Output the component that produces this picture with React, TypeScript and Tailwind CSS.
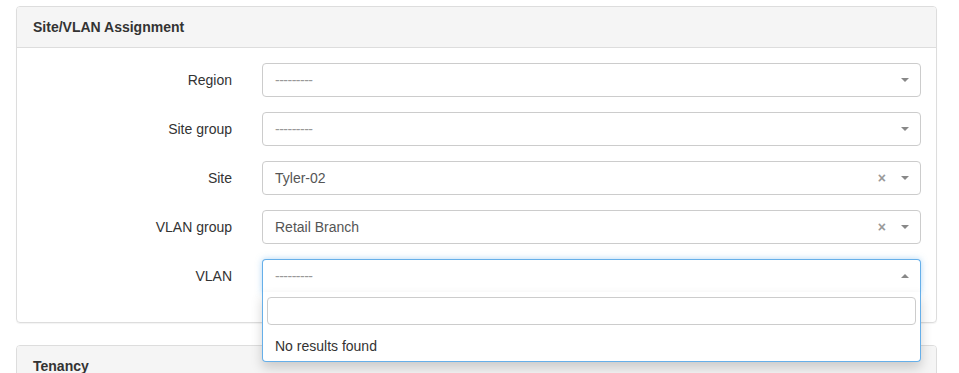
import React from "react";

const rows = [
  { label: "Region", value: "", clear: false },
  { label: "Site group", value: "", clear: false },
  { label: "Site", value: "Tyler-02", clear: true },
  { label: "VLAN group", value: "Retail Branch", clear: true },
];

function Caret({ up }: { up?: boolean }) {
  return (
    <span
      className={
        up
          ? "w-0 h-0 border-x-[4px] border-x-transparent border-b-[4px] border-b-[#888]"
          : "w-0 h-0 border-x-[4px] border-x-transparent border-t-[4px] border-t-[#888]"
      }
    />
  );
}

function Select({ value, clear }: { value: string; clear: boolean }) {
  return (
    <div className="flex-1 h-[34px] flex items-center border border-[#ccc] rounded-[4px] bg-white pl-3 pr-[11px]">
      {value ? (
        <span className="flex-1 text-[14px] text-[#555]">{value}</span>
      ) : (
        <span className="flex-1 text-[14px] text-[#999] tracking-[-0.5px]">---------</span>
      )}
      {clear && <span className="text-[14px] font-bold text-[#999] mr-[15px] leading-none">×</span>}
      <Caret />
    </div>
  );
}

export default function App() {
  return (
    <div className="w-[959px] h-[373px] overflow-hidden bg-white px-4 pt-[6px] font-['Liberation_Sans',Arial,sans-serif] text-[#333]">
      {/* Site/VLAN panel */}
      <div className="w-[921px] border border-[#ddd] rounded-[4px] shadow-[0_1px_1px_rgba(0,0,0,0.05)]">
        <div className="h-[41px] bg-[#f5f5f5] border-b border-[#ddd] rounded-t-[3px] px-4 flex items-center">
          <h3 className="text-[14px] font-bold text-[#333]">Site/VLAN Assignment</h3>
        </div>
        <div className="pt-[15px] pb-[29px] pr-[15px] flex flex-col gap-[15px]">
          {rows.map((r) => (
            <div key={r.label} className="flex items-center gap-[30px]">
              <label className="w-[215px] text-right text-[14px] text-[#333]">{r.label}</label>
              <Select value={r.value} clear={r.clear} />
            </div>
          ))}
          <div className="flex items-center gap-[30px]">
            <label className="w-[215px] text-right text-[14px] text-[#333]">VLAN</label>
            <div className="relative flex-1">
              <div className="h-[34px] flex items-center border border-[#66afe9] border-b-[#e8eef4] rounded-t-[4px] bg-white pl-3 pr-[11px] shadow-[0_0_6px_rgba(102,175,233,0.5)]">
                <span className="flex-1 text-[14px] text-[#999] tracking-[-0.5px]">---------</span>
                <Caret up />
              </div>
              <div className="absolute z-10 left-0 right-0 top-[33px] bg-white border border-t-0 border-[#66afe9] rounded-b-[4px] shadow-[0_6px_12px_rgba(0,0,0,0.175)] pt-[5px] pb-[1px]">
                <div className="px-[4px]">
                  <div className="h-[28px] border border-[#ccc] rounded-[4px]" />
                </div>
                <div className="h-[28px] mt-[7px] flex items-center px-3 text-[14px] text-[#333]">No results found</div>
              </div>
            </div>
          </div>
        </div>
      </div>

      {/* Tenancy panel */}
      <div className="w-[921px] mt-[22px] border border-[#ddd] rounded-[4px]">
        <div className="h-[41px] bg-[#f5f5f5] border-b border-[#ddd] rounded-t-[3px] px-4 flex items-center">
          <h3 className="text-[14px] font-bold text-[#333]">Tenancy</h3>
        </div>
      </div>
    </div>
  );
}
